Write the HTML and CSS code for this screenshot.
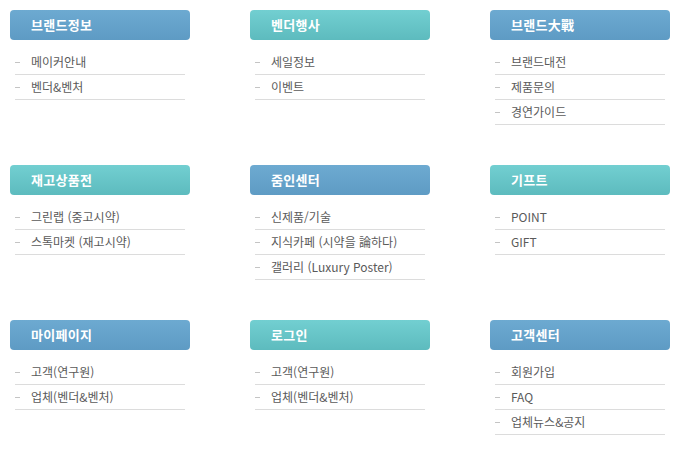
FILE: index.html
```html
<!DOCTYPE html>
<html lang="ko">
<head>
<meta charset="utf-8">
<link rel="stylesheet" href="styles.css">
</head>
<body>
<div class="grid">
  <section class="box">
    <h2 class="head blue">브랜드정보</h2>
    <ul class="list"><li>메이커안내</li><li>벤더&amp;벤처</li></ul>
  </section>
  <section class="box">
    <h2 class="head teal">벤더행사</h2>
    <ul class="list"><li>세일정보</li><li>이벤트</li></ul>
  </section>
  <section class="box">
    <h2 class="head blue">브랜드大戰</h2>
    <ul class="list"><li>브랜드대전</li><li>제품문의</li><li>경연가이드</li></ul>
  </section>
  <section class="box">
    <h2 class="head teal">재고상품전</h2>
    <ul class="list"><li>그린랩 (중고시약)</li><li>스톡마켓 (재고시약)</li></ul>
  </section>
  <section class="box">
    <h2 class="head blue">줌인센터</h2>
    <ul class="list"><li>신제품/기술</li><li>지식카페 (시약을 論하다)</li><li>갤러리 (Luxury Poster)</li></ul>
  </section>
  <section class="box">
    <h2 class="head teal">기프트</h2>
    <ul class="list"><li>POINT</li><li>GIFT</li></ul>
  </section>
  <section class="box">
    <h2 class="head blue">마이페이지</h2>
    <ul class="list"><li>고객(연구원)</li><li>업체(벤더&amp;벤처)</li></ul>
  </section>
  <section class="box">
    <h2 class="head teal">로그인</h2>
    <ul class="list"><li>고객(연구원)</li><li>업체(벤더&amp;벤처)</li></ul>
  </section>
  <section class="box">
    <h2 class="head blue">고객센터</h2>
    <ul class="list"><li>회원가입</li><li>FAQ</li><li>업체뉴스&amp;공지</li></ul>
  </section>
</div>
</body>
</html>
```
FILE: styles.css
```css
html, body {
  margin: 0;
  padding: 0;
  background: #fff;
}
body {
  font-family: "Noto Sans CJK KR", "Noto Sans", sans-serif;
  width: 680px;
  height: 470px;
  overflow: hidden;
}
.grid {
  display: grid;
  grid-template-columns: repeat(3, 180px);
  grid-auto-rows: 155px;
  column-gap: 60px;
  padding: 10px 0 0 10px;
}
.head {
  margin: 0;
  height: 30px;
  line-height: 30px;
  border-radius: 4px;
  padding-left: 21px;
  color: #fff;
  font-size: 13px;
  font-weight: bold;
  letter-spacing: 0.3px;
}
.blue {
  background: linear-gradient(180deg, #6daad1 0%, #5e9bc4 100%);
}
.teal {
  background: linear-gradient(180deg, #72cfd1 0%, #5dbbbe 100%);
}
.list {
  list-style: none;
  margin: 10px 0 0 5px;
  padding: 0;
  width: 170px;
}
.list li {
  position: relative;
  height: 24px;
  line-height: 23px;
  border-bottom: 1px solid #dcdcdc;
  padding-left: 16px;
  font-size: 12px;
  color: #5a5a5a;
}
.list li::before {
  content: "";
  position: absolute;
  left: 0;
  top: 12px;
  width: 5px;
  height: 1px;
  background: #c4c4c4;
}
```
